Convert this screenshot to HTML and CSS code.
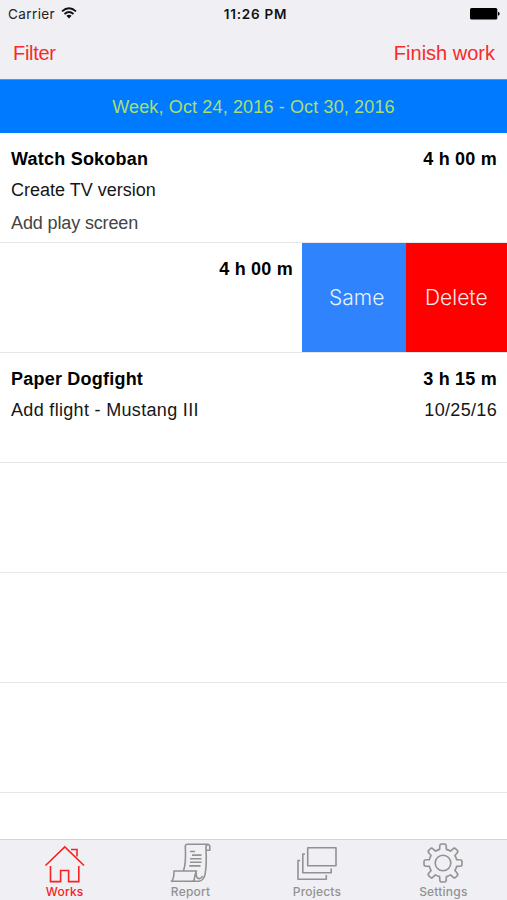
FILE: index.html
```html
<!DOCTYPE html>
<html lang="en">
<head>
<meta charset="utf-8">
<title>Works</title>
<link rel="stylesheet" href="styles.css">
</head>
<body>
<div class="app">
  <div class="status">
    <div class="carrier"><span>Carrier</span>
      <svg width="16" height="12" viewBox="0 0 16 12" fill="none" stroke="#111" stroke-width="1.8"><path d="M1 4.3Q8-1.9 15 4.3M3.5 7Q8 3 12.5 7"/><path d="M8 11.4L5.4 8.8Q8 6.8 10.6 8.8Z" fill="#111" stroke="none"/></svg>
    </div>
    <div class="clock">11:26 PM</div>
    <svg class="battery" width="30" height="12" viewBox="0 0 30 12"><rect width="27.3" height="11.5" rx="1.5"/><path d="M28 3.8q1.7.4 1.7 2t-1.7 2z"/></svg>
  </div>
  <div class="nav"><span class="filter">Filter</span><span class="finish">Finish work</span></div>
  <div class="week"><span>Week, Oct 24, 2016 - Oct 30, 2016</span></div>
  <div class="list">
    <div class="row">
      <div class="line bold"><span>Watch Sokoban</span><span class="time">4 h 00 m</span></div>
      <div class="line"><span>Create TV version</span></div>
      <div class="line light"><span>Add play screen</span></div>
    </div>
    <div class="row swiped">
      <div class="shifted"><div class="line bold"><span></span><span class="time">4 h 00 m</span></div></div>
      <div class="action same"><span>Same</span></div>
      <div class="action delete"><span>Delete</span></div>
    </div>
    <div class="row">
      <div class="line bold"><span>Paper Dogfight</span><span class="time">3 h 15 m</span></div>
      <div class="line"><span class="wide">Add flight - Mustang III</span><span class="wide">10/25/16</span></div>
    </div>
    <div class="row"></div>
    <div class="row"></div>
    <div class="row"></div>
  </div>
  <div class="tabs">
    <div class="tab active">
      <svg width="42" height="40" viewBox="0 0 42 40"><path d="M1.5 22.5L20.8 3.9 40 22.5M6.5 23V38.6H16.6V27.5H24.6V38.6H34.8V23M27 6.5H33V13.5"/></svg>
      <span>Works</span>
    </div>
    <div class="tab">
      <svg width="42" height="40" viewBox="0 0 42 40"><path d="M13.6 27.5Q16.2 20 15.3 3.5Q15.3 1.3 17.5 1.3H38Q35.8 2 36 5V7.3H39.8V4Q39.8 1.3 37.5 1.3M36 7Q36.8 20 35.3 30Q34.2 37.7 29 38.2H1.5Q4 36.5 4 28H26.5Q24.5 32 24.2 36.7L23 38M26.2 28.5Q25.4 35.7 29.5 35.6Q31.7 35.2 32.5 33"/><path d="M20 8.5H25M22 12.1H31.5M20 15.7H31.5M20 19.3H31.5M19.3 22.9H30.5" /></svg>
      <span>Report</span>
    </div>
    <div class="tab">
      <svg width="42" height="40" viewBox="0 0 42 40"><path d="M11.7 4.8H40V22.8H11.7ZM9 11H6.8V29.7H35.2V25.5M4.2 17.5H2V36.2H30.3V32"/></svg>
      <span>Projects</span>
    </div>
    <div class="tab">
      <svg width="42" height="40" viewBox="0 0 42 40"><circle cx="21" cy="20" r="7.8"/><path d="M17.8 3.2Q17.8 1 19.5 1H22.5Q24.2 1 24.2 3.2L24.4 6.4Q26.7 6.9 28.5 8.1L30.8 6.1Q32.3 4.5 33.6 5.7L35.3 7.4Q36.5 8.7 34.9 10.2L32.9 12.5Q34.1 14.3 34.6 16.6L37.8 16.8Q40 16.8 40 18.5V21.5Q40 23.2 37.8 23.2L34.6 23.4Q34.1 25.7 32.9 27.5L34.9 29.8Q36.5 31.3 35.3 32.6L33.6 34.3Q32.3 35.5 30.8 33.9L28.5 31.9Q26.7 33.1 24.4 33.6L24.2 36.8Q24.2 39 22.5 39H19.5Q17.8 39 17.8 36.8L17.6 33.6Q15.3 33.1 13.5 31.9L11.2 33.9Q9.7 35.5 8.4 34.3L6.7 32.6Q5.5 31.3 7.1 29.8L9.1 27.5Q7.9 25.7 7.4 23.4L4.2 23.2Q2 23.2 2 21.5V18.5Q2 16.8 4.2 16.8L7.4 16.6Q7.9 14.3 9.1 12.5L7.1 10.2Q5.5 8.7 6.7 7.4L8.4 5.7Q9.7 4.5 11.2 6.1L13.5 8.1Q15.3 6.9 17.6 6.4Z"/></svg>
      <span>Settings</span>
    </div>
  </div>
</div>
</body>
</html>
```
FILE: styles.css
```css
* { box-sizing: border-box; }
body { margin: 0; background: #fff; font-family: "Liberation Sans", sans-serif; color: #000; }
.app { width: 507px; height: 900px; display: flex; flex-direction: column; overflow: hidden; white-space: nowrap; }
.status { height: 27px; flex: none; display: grid; grid-template-columns: 1fr auto 1fr; align-items: center; padding: 1px 7px 0 8px; background: #efeff4; font: 13.5px/18px Inter, sans-serif; color: #222; }
.carrier { display: flex; align-items: center; gap: 6px; letter-spacing: .4px; }
.carrier svg { margin-top: -2px; }
.clock { font-weight: 600; color: #111; letter-spacing: .75px; padding-left: 3px; }
.battery { justify-self: end; }
.nav { height: 52px; flex: none; display: flex; justify-content: space-between; padding: 0 12px 0 13px; line-height: 52px; background: #efeff4; color: #f82a2a; font-size: 20px; }
.filter { letter-spacing: -.3px; }
.week { height: 54px; flex: none; background: #007aff; border-top: 1px solid #4698ee; color: #a9df70; text-align: center; font-size: 18px; letter-spacing: .14px; line-height: 54px; }
.list { flex: 1; min-height: 0; overflow: hidden; font-size: 18px; }
.row { height: 110px; padding: 10px 10px 0 11px; border-bottom: 1px solid #e7e7e9; }
.line { height: 32px; display: flex; justify-content: space-between; line-height: 32px; color: #161616; }
.line + .line { line-height: 31px; }
.line + .light { color: #444; letter-spacing: -.13px; line-height: 32px; }
.bold { font-weight: 700; color: #000; letter-spacing: .22px; }
.wide { letter-spacing: .32px; }
.swiped { display: flex; padding: 0; }
.shifted { width: 302px; padding: 10px 9px 0 0; }
.action { height: 109px; color: #e6f2ff; font: 350 21px/110px Inter, sans-serif; }
.same { width: 104px; padding-left: 27px; background: #2f83fc; }
.delete { width: 101px; padding-left: 19px; background: #f00; color: #ffeaea; }
.tabs { height: 61px; flex: none; display: grid; grid-template-columns: repeat(4, 126.4px); background: #efeff4; border-top: 1px solid #d4d4d7; }
.tab { display: flex; flex-direction: column; align-items: center; padding: 3px 0 0 2px; color: #929292; font: 500 12px/17px Inter, sans-serif; letter-spacing: .2px; }
.tab svg { flex: none; fill: none; stroke: currentColor; stroke-width: 1.6; stroke-linejoin: round; }
.active { color: #f82222; padding-left: 3px; }
.active svg { stroke-linejoin: miter; }
```
